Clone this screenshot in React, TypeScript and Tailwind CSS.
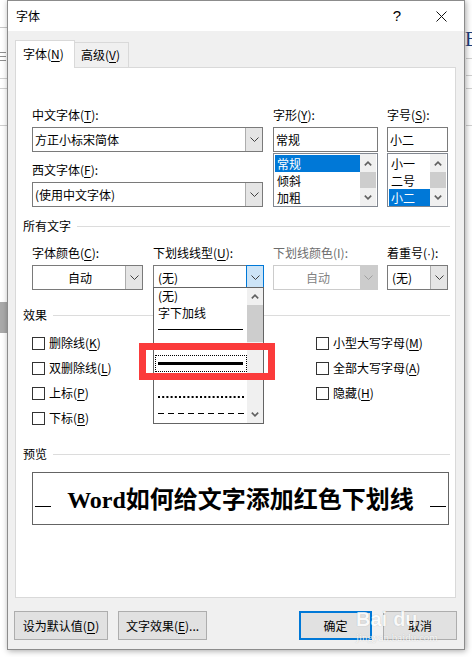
import React from "react";

const K = ({ c }: { c: string }) => (
  <span className="underline underline-offset-[2px] decoration-[1px]">{c}</span>
);

const Chevron = ({ color = "#404040" }: { color?: string }) => (
  <svg width="9" height="5" viewBox="0 0 9 5">
    <path d="M0.5 0.5 L4.5 4.5 L8.5 0.5" fill="none" stroke={color} strokeWidth="1" />
  </svg>
);

const ArrowUp = () => (
  <svg width="8" height="5" viewBox="0 0 8 5">
    <path d="M0.8 4.4 L4 1.2 L7.2 4.4" fill="none" stroke="#606060" strokeWidth="1.6" />
  </svg>
);

const ArrowDown = () => (
  <svg width="8" height="5" viewBox="0 0 8 5">
    <path d="M0.8 0.6 L4 3.8 L7.2 0.6" fill="none" stroke="#606060" strokeWidth="1.6" />
  </svg>
);

function Combo({
  w,
  text,
  center,
  disabled,
  focused,
  pl,
}: {
  w: string;
  text: string;
  center?: boolean;
  disabled?: boolean;
  focused?: boolean;
  pl?: string;
}) {
  return (
    <div
      className={`${w} h-[25px] flex border ${
        disabled ? "border-[#cccccc]" : "border-[#7a7a7a]"
      } bg-white`}
    >
      <div
        className={`flex-1 flex items-center ${pl ?? "pl-[2px]"} text-[12px] ${
          center ? "justify-center" : ""
        } ${disabled ? "text-[#838383]" : "text-black"}`}
      >
        {text}
      </div>
      <div
        className={`w-[17px] flex items-center justify-center ${
          focused
            ? "bg-[#cce4f7] border border-[#0078d7] -my-px -mr-px w-[18px]"
            : disabled
            ? "bg-[#cccccc]"
            : "bg-[#e5e5e5] border-l border-[#adadad]"
        }`}
      >
        <Chevron color={disabled ? "#a0a0a0" : "#404040"} />
      </div>
    </div>
  );
}

function ListBox({ items, sel }: { items: string[]; sel: number }) {
  return (
    <div className="h-[54px] mt-px border border-[#828790] bg-white flex">
      <div className="flex-1 pt-px pl-px">
        {items.map((t, i) => (
          <div
            key={t}
            className={`h-[17px] flex items-center pl-[2px] text-[12px] ${
              i === sel ? "bg-[#0078d7] text-white" : "text-black"
            }`}
          >
            {t}
          </div>
        ))}
      </div>
      <div className="w-[16px] mr-px bg-[#f0f0f0] flex flex-col">
        <div className="h-[18px] flex items-center justify-center">
          <ArrowUp />
        </div>
        <div className="h-[16px] bg-[#cdcdcd]" />
        <div className="flex-1 flex items-center justify-center">
          <ArrowDown />
        </div>
      </div>
    </div>
  );
}

function Label({ children, gray }: { children: React.ReactNode; gray?: boolean }) {
  return (
    <div className={`h-[16px] leading-[16px] text-[12px] mb-[4px] whitespace-nowrap ${gray ? "text-[#6d6d6d]" : "text-black"}`}>
      {children}
    </div>
  );
}

function GroupHeader({ title }: { title: string }) {
  return (
    <div className="flex items-center h-[16px] pl-[7px] pr-[5px]">
      <span className="text-[12px] leading-[16px] whitespace-nowrap">{title}</span>
      <div className="flex-1 h-px bg-[#dcdcdc] ml-[6px]" />
    </div>
  );
}

function Check({ children }: { children: React.ReactNode }) {
  return (
    <div className="flex items-center h-[16px]">
      <div className="w-[13px] h-[13px] border border-[#333333] bg-white" />
      <span className="ml-[4px] text-[12px] leading-[16px] whitespace-nowrap">{children}</span>
    </div>
  );
}

function Btn({
  children,
  w,
  ml,
  focused,
}: {
  children: React.ReactNode;
  w: string;
  ml: string;
  focused?: boolean;
}) {
  return (
    <div
      className={`${w} ${ml} h-[29px] flex items-center justify-center text-[12px] bg-[#e1e1e1] ${
        focused ? "border-2 border-[#0078d7]" : "border border-[#adadad]"
      }`}
    >
      {children}
    </div>
  );
}

export default function App() {
  return (
    <div className="relative w-[472px] h-[657px] overflow-hidden bg-white font-['Noto_Sans_CJK_SC',sans-serif] text-[12px] text-black">
      {/* document behind the dialog */}
      <div className="absolute left-0 top-[27px] w-[7px] h-px bg-[#c8c8c8]" />
      <div className="absolute left-0 top-[52px] w-[6px] h-px bg-[#909090]" />
      <div className="absolute left-0 top-[56px] w-[6px] h-px bg-[#909090]" />
      <div className="absolute left-0 top-[60px] w-[6px] h-px bg-[#909090]" />
      <div className="absolute left-0 top-[78px] w-[7px] h-px bg-[#d0d0d0]" />
      <div className="absolute left-0 top-[88px] w-[7px] h-px bg-[#d0d0d0]" />
      <div className="absolute left-0 top-[125px] w-[7px] h-px bg-[#d0d0d0]" />
      <div className="absolute left-0 top-[302px] w-[7px] h-[31px] bg-[#a9a9a9]" />
      <div className="absolute left-[465px] top-[30px] w-[7px] h-[18px] overflow-hidden text-[20px] leading-[18px] font-['Liberation_Serif',serif] text-[#1f3f7a]">B</div>
      <div className="absolute left-[466px] top-[58px] w-[6px] h-px bg-[#d0d0d0]" />
      <div className="absolute left-[466px] top-[75px] w-[6px] h-px bg-[#d0d0d0]" />
      <div className="absolute left-[466px] top-[88px] w-[6px] h-px bg-[#d0d0d0]" />
      <div className="absolute left-[466px] top-[125px] w-[6px] h-px bg-[#d0d0d0]" />

      <div className="pl-[7px]">
        <div className="relative w-[458px] h-[650px] border border-[#8c8c8c] bg-[#f0f0f0] shadow-[1px_1px_6px_rgba(0,0,0,0.35)] flex flex-col">
          {/* title bar */}
          <div className="h-[30px] bg-white flex items-center pl-[8px] shrink-0">
            <span className="text-[12px] leading-[16px]">字体</span>
            <span className="ml-auto text-[15px] leading-[16px] font-['Liberation_Sans',sans-serif] mr-[35px]">?</span>
            <svg width="11" height="11" viewBox="0 0 11 11" className="mr-[17px]">
              <path d="M0.5 0.5 L10.5 10.5 M10.5 0.5 L0.5 10.5" stroke="#111" strokeWidth="1" />
            </svg>
          </div>

          {/* body */}
          <div className="flex-1 pl-[7px] pt-[9px]">
            {/* tabs */}
            <div className="flex items-end h-[27px]">
              <div className="relative z-10 w-[60px] h-[28px] -mb-px bg-white border-l border-t border-r border-[#d9d9d9] flex items-center pl-[7px] pb-[1px]">
                字体(<K c="N" />)
              </div>
              <div className="w-[54px] h-[25px] bg-[#f0f0f0] border-t border-r border-[#d9d9d9] flex items-center pl-[6px]">
                高级(<K c="V" />)
              </div>
            </div>

            {/* panel */}
            <div className="relative w-[441px] h-[531px] bg-white border border-[#d9d9d9]">
              {/* fonts row */}
              <div className="flex pt-[39px] pl-[16px]">
                <div className="w-[231px] flex flex-col">
                  <Label>
                    中文字体(<K c="T" />):
                  </Label>
                  <Combo w="w-[231px]" text="方正小标宋简体" />
                  <div className="h-[10px]" />
                  <Label>
                    西文字体(<K c="F" />):
                  </Label>
                  <Combo w="w-[231px]" text="(使用中文字体)" />
                </div>
                <div className="w-[105px] ml-[10px] flex flex-col">
                  <Label>
                    字形(<K c="Y" />):
                  </Label>
                  <Combo w="w-[105px] [&>div:last-child]:hidden" text="常规" />
                  <ListBox items={["常规", "倾斜", "加粗"]} sel={0} />
                </div>
                <div className="w-[61px] ml-[9px] flex flex-col">
                  <Label>
                    字号(<K c="S" />):
                  </Label>
                  <Combo w="w-[61px] [&>div:last-child]:hidden" text="小二" />
                  <ListBox items={["小一", "二号", "小二"]} sel={2} />
                </div>
              </div>

              {/* 所有文字 */}
              <div className="mt-[11px]">
                <GroupHeader title="所有文字" />
              </div>
              <div className="flex pl-[16px] mt-[11px]">
                <div className="w-[111px] flex flex-col">
                  <Label>
                    字体颜色(<K c="C" />):
                  </Label>
                  <Combo w="w-[111px]" text="自动" center />
                </div>
                <div className="w-[111px] ml-[10px] flex flex-col">
                  <Label>
                    下划线线型(<K c="U" />):
                  </Label>
                  <Combo w="w-[111px]" text="(无)" focused pl="pl-[4px]" />
                </div>
                <div className="w-[105px] ml-[9px] flex flex-col">
                  <Label gray>下划线颜色(I):</Label>
                  <Combo w="w-[105px]" text="自动" center disabled />
                </div>
                <div className="w-[61px] ml-[9px] flex flex-col">
                  <Label>
                    着重号(<span className="font-['Liberation_Sans',sans-serif]">·</span>):
                  </Label>
                  <Combo w="w-[61px]" text="(无)" pl="pl-[4px]" />
                </div>
              </div>

              {/* 效果 */}
              <div className="mt-[17px]">
                <GroupHeader title="效果" />
              </div>
              <div className="flex pl-[16px] mt-[12px]">
                <div className="w-[284px] flex flex-col gap-[9px]">
                  <Check>
                    删除线(<K c="K" />)
                  </Check>
                  <Check>
                    双删除线(<K c="L" />)
                  </Check>
                  <Check>
                    上标(<K c="P" />)
                  </Check>
                  <Check>
                    下标(<K c="B" />)
                  </Check>
                </div>
                <div className="flex flex-col gap-[9px]">
                  <Check>
                    小型大写字母(<K c="M" />)
                  </Check>
                  <Check>
                    全部大写字母(<K c="A" />)
                  </Check>
                  <Check>
                    隐藏(<K c="H" />)
                  </Check>
                </div>
              </div>

              {/* 预览 */}
              <div className="mt-[20px]">
                <GroupHeader title="预览" />
              </div>
              <div className="pl-[16px] mt-[10px]">
                <div className="w-[417px] h-[53px] border border-[#646464] flex items-center px-[2px]">
                  <div className="w-[16px] h-[1.5px] bg-black mt-[16px]" />
                  <div className="flex-1 flex justify-center items-baseline whitespace-nowrap font-bold leading-[30px] text-[24px]">
                    <span className="font-['Liberation_Serif',serif]">Word</span>
                    <span className="font-['Noto_Sans_CJK_SC',sans-serif]">如何给文字添加红色下划线</span>
                  </div>
                  <div className="w-[16px] h-[1.5px] bg-black mt-[16px]" />
                </div>
              </div>

              {/* open dropdown list */}
              <div className="absolute left-[137px] top-[219px] w-[111px] h-[137px] z-20 bg-white border border-[#646464] flex">
                <div className="flex-1 pl-px">
                  <div className="h-[16.8px] flex items-center pl-[3px] text-[12px] leading-[16px]">(无)</div>
                  <div className="h-[16.8px] flex items-center pl-[3px] text-[12px] leading-[16px]">字下加线</div>
                  <div className="h-[16.8px] flex items-center pl-[3px]">
                    <div className="w-[85px] h-px bg-black" />
                  </div>
                  <div className="h-[16.8px] flex flex-col justify-center gap-[2px] pl-[3px]">
                    <div className="w-[85px] h-px bg-black" />
                    <div className="w-[85px] h-px bg-black" />
                  </div>
                  <div className="h-[16.8px] flex items-center pl-[2px] border border-dotted border-black">
                    <div className="w-[85px] h-[3px] bg-black" />
                  </div>
                  <div className="h-[16.8px]" />
                  <div className="h-[16.8px] flex items-center pl-[3px]">
                    <svg width="86" height="2" viewBox="0 0 86 2">
                      <line x1="0" y1="1" x2="86" y2="1" stroke="#000" strokeWidth="2" strokeDasharray="2 2.2" />
                    </svg>
                  </div>
                  <div className="h-[16.8px] flex items-center pl-[3px]">
                    <svg width="86" height="1" viewBox="0 0 86 1">
                      <line x1="0" y1="0.5" x2="86" y2="0.5" stroke="#000" strokeWidth="1" strokeDasharray="6 4" />
                    </svg>
                  </div>
                </div>
                <div className="w-[16px] bg-[#f0f0f0] flex flex-col">
                  <div className="h-[17px] flex items-center justify-center">
                    <ArrowUp />
                  </div>
                  <div className="h-[37px] bg-[#cdcdcd]" />
                  <div className="flex-1" />
                  <div className="h-[17px] flex items-center justify-center">
                    <ArrowDown />
                  </div>
                </div>
              </div>

              {/* red highlight */}
              <div className="absolute left-[123px] top-[275px] w-[136px] h-[37px] z-30 border-[7px] border-[#fb3b3b]" />
            </div>

            {/* buttons */}
            <div className="flex mt-[13px] -ml-[1px]">
              <Btn w="w-[94px]" ml="ml-0">
                设为默认值(<K c="D" />)
              </Btn>
              <Btn w="w-[89px]" ml="ml-[10px]">
                文字效果(<K c="E" />)...
              </Btn>
              <Btn w="w-[73px]" ml="ml-[92px]" focused>
                确定
              </Btn>
              <Btn w="w-[74px]" ml="ml-[11px]">
                取消
              </Btn>
            </div>
          </div>

          {/* watermark */}
          <div className="absolute left-[348px] top-[606px] z-40 flex flex-col items-start pointer-events-none opacity-80">
            <div className="flex items-end text-[20px] leading-[24px] font-bold font-['Liberation_Sans',sans-serif] text-white [text-shadow:0_0_1px_rgba(0,0,0,0.3)]">
              <span>Bai</span>
              <span className="ml-[6px]">du</span>
            </div>
            <div className="text-[11px] leading-[12px] font-['Liberation_Serif',serif] text-white [text-shadow:0_0_1px_rgba(0,0,0,0.3)]">
              jingyan.baidu.com
            </div>
          </div>
        </div>
      </div>
    </div>
  );
}
